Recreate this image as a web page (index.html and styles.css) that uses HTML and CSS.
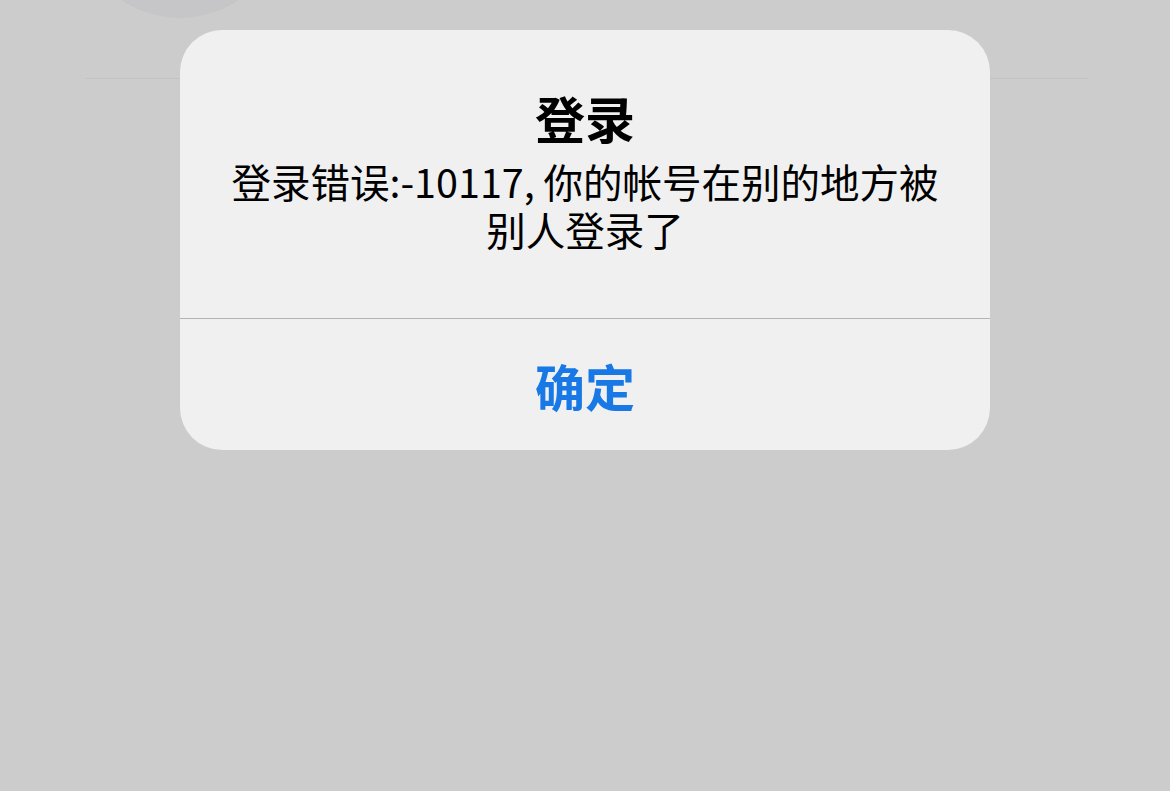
FILE: index.html
```html
<!DOCTYPE html>
<html lang="zh-CN">

<head>
    <meta charset="UTF-8">
    <meta name="viewport" content="width=device-width, initial-scale=1.0">
    <title>登录</title>
    <link rel="stylesheet" href="styles.css">
</head>

<body>

    <section class="page">
        <div class="profile">
            <div class="avatar"></div>
        </div>
    </section>

    <!-- 登录错误弹窗 -->
    <div class="alert">
        <div class="alert-body">
            <h2 class="alert-title">登录</h2>
            <p class="alert-message">登录错误:-10117, 你的帐号在别的地方被<br>别人登录了</p>
        </div>
        <button class="alert-button">确定</button>
    </div>

</body>

</html>
```

FILE: styles.css
```css
body {
    font-family: "Noto Sans CJK SC", "Noto Sans", sans-serif;
    margin: 0;
    padding: 0;
    background: #cccccc;
    height: 791px;
    overflow: hidden;
    position: relative;
}

.page {
    padding: 0 82px 0 85px;
}

.profile {
    display: flow-root;
    height: 78px;
    border-bottom: 1px solid #c3c3c3;
}

.avatar {
    width: 210px;
    height: 210px;
    border-radius: 50%;
    background: #c6c6c9;
    margin: -192px 0 0 -10px;
}

.alert {
    position: absolute;
    top: 30px;
    left: 180px;
    width: 810px;
    background: #f0f0f0;
    border-radius: 42px;
    overflow: hidden;
    text-align: center;
}

.alert-body {
    padding: 57px 40px 65px;
    border-bottom: 1px solid #b4b4b4;
}

.alert-title {
    margin: 0;
    font-size: 50px;
    line-height: 60px;
    font-weight: 700;
    color: #000;
}

.alert-message {
    margin: 10px 0 0;
    font-size: 39.5px;
    line-height: 48px;
    color: #000;
}

.alert-button {
    display: block;
    width: 100%;
    height: 131px;
    border: none;
    background: none;
    font-family: inherit;
    font-size: 50px;
    font-weight: 700;
    color: #1878e6;
    padding: 0;
}
```
